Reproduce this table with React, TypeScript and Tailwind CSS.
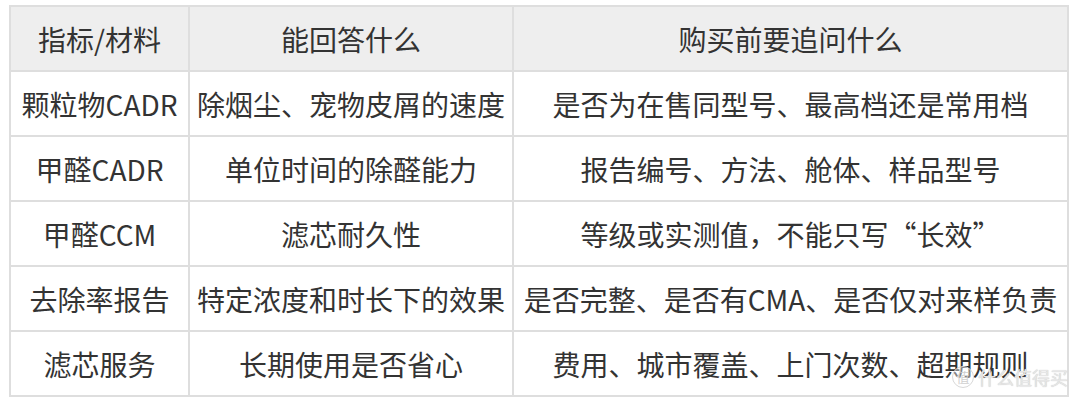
import React from "react";

const rows: [string, string, string][] = [
  ["颗粒物CADR", "除烟尘、宠物皮屑的速度", "是否为在售同型号、最高档还是常用档"],
  ["甲醛CADR", "单位时间的除醛能力", "报告编号、方法、舱体、样品型号"],
  ["甲醛CCM", "滤芯耐久性", "等级或实测值，不能只写“长效”"],
  ["去除率报告", "特定浓度和时长下的效果", "是否完整、是否有CMA、是否仅对来样负责"],
  ["滤芯服务", "长期使用是否省心", "费用、城市覆盖、上门次数、超期规则"],
];

export default function App() {
  return (
    <div
      className="relative w-[1080px] h-[400px] bg-white overflow-hidden"
      style={{ fontFamily: '"Noto Sans CJK SC", "Noto Sans", sans-serif' }}
    >
      <div className="pl-[9px] pt-[5px]">
        <table className="border-collapse table-fixed w-[1060px] text-[#333333] text-[28px]">
          <colgroup>
            <col className="w-[179px]" />
            <col className="w-[324px]" />
            <col />
          </colgroup>
          <thead>
            <tr className="h-[65px] bg-[#eeeeee]">
              <th className="border-2 border-[#dedede] font-normal text-center p-0 leading-none">指标/材料</th>
              <th className="border-2 border-[#dedede] font-normal text-center p-0 leading-none">能回答什么</th>
              <th className="border-2 border-[#dedede] font-normal text-center p-0 leading-none">购买前要追问什么</th>
            </tr>
          </thead>
          <tbody>
            {rows.map((r, i) => (
              <tr key={i} className="h-[65px]">
                {r.map((c, j) => (
                  <td
                    key={j}
                    className="border-2 border-[#dedede] text-center p-0 leading-none whitespace-nowrap"
                  >
                    {c}
                  </td>
                ))}
              </tr>
            ))}
          </tbody>
        </table>
      </div>
      <div className="absolute left-[952px] top-[366px] flex items-center gap-[4px] pointer-events-none">
        <div className="w-[22px] h-[22px] rounded-full border border-[#d8d8d8] flex items-center justify-center text-[13px] text-[#d0d0d0] bg-white/40">
          值
        </div>
        <span
          className="text-[18px] text-[#e6e6e6] leading-none"
          style={{ textShadow: "0 0 1px #bdbdbd" }}
        >
          什么值得买
        </span>
      </div>
    </div>
  );
}
